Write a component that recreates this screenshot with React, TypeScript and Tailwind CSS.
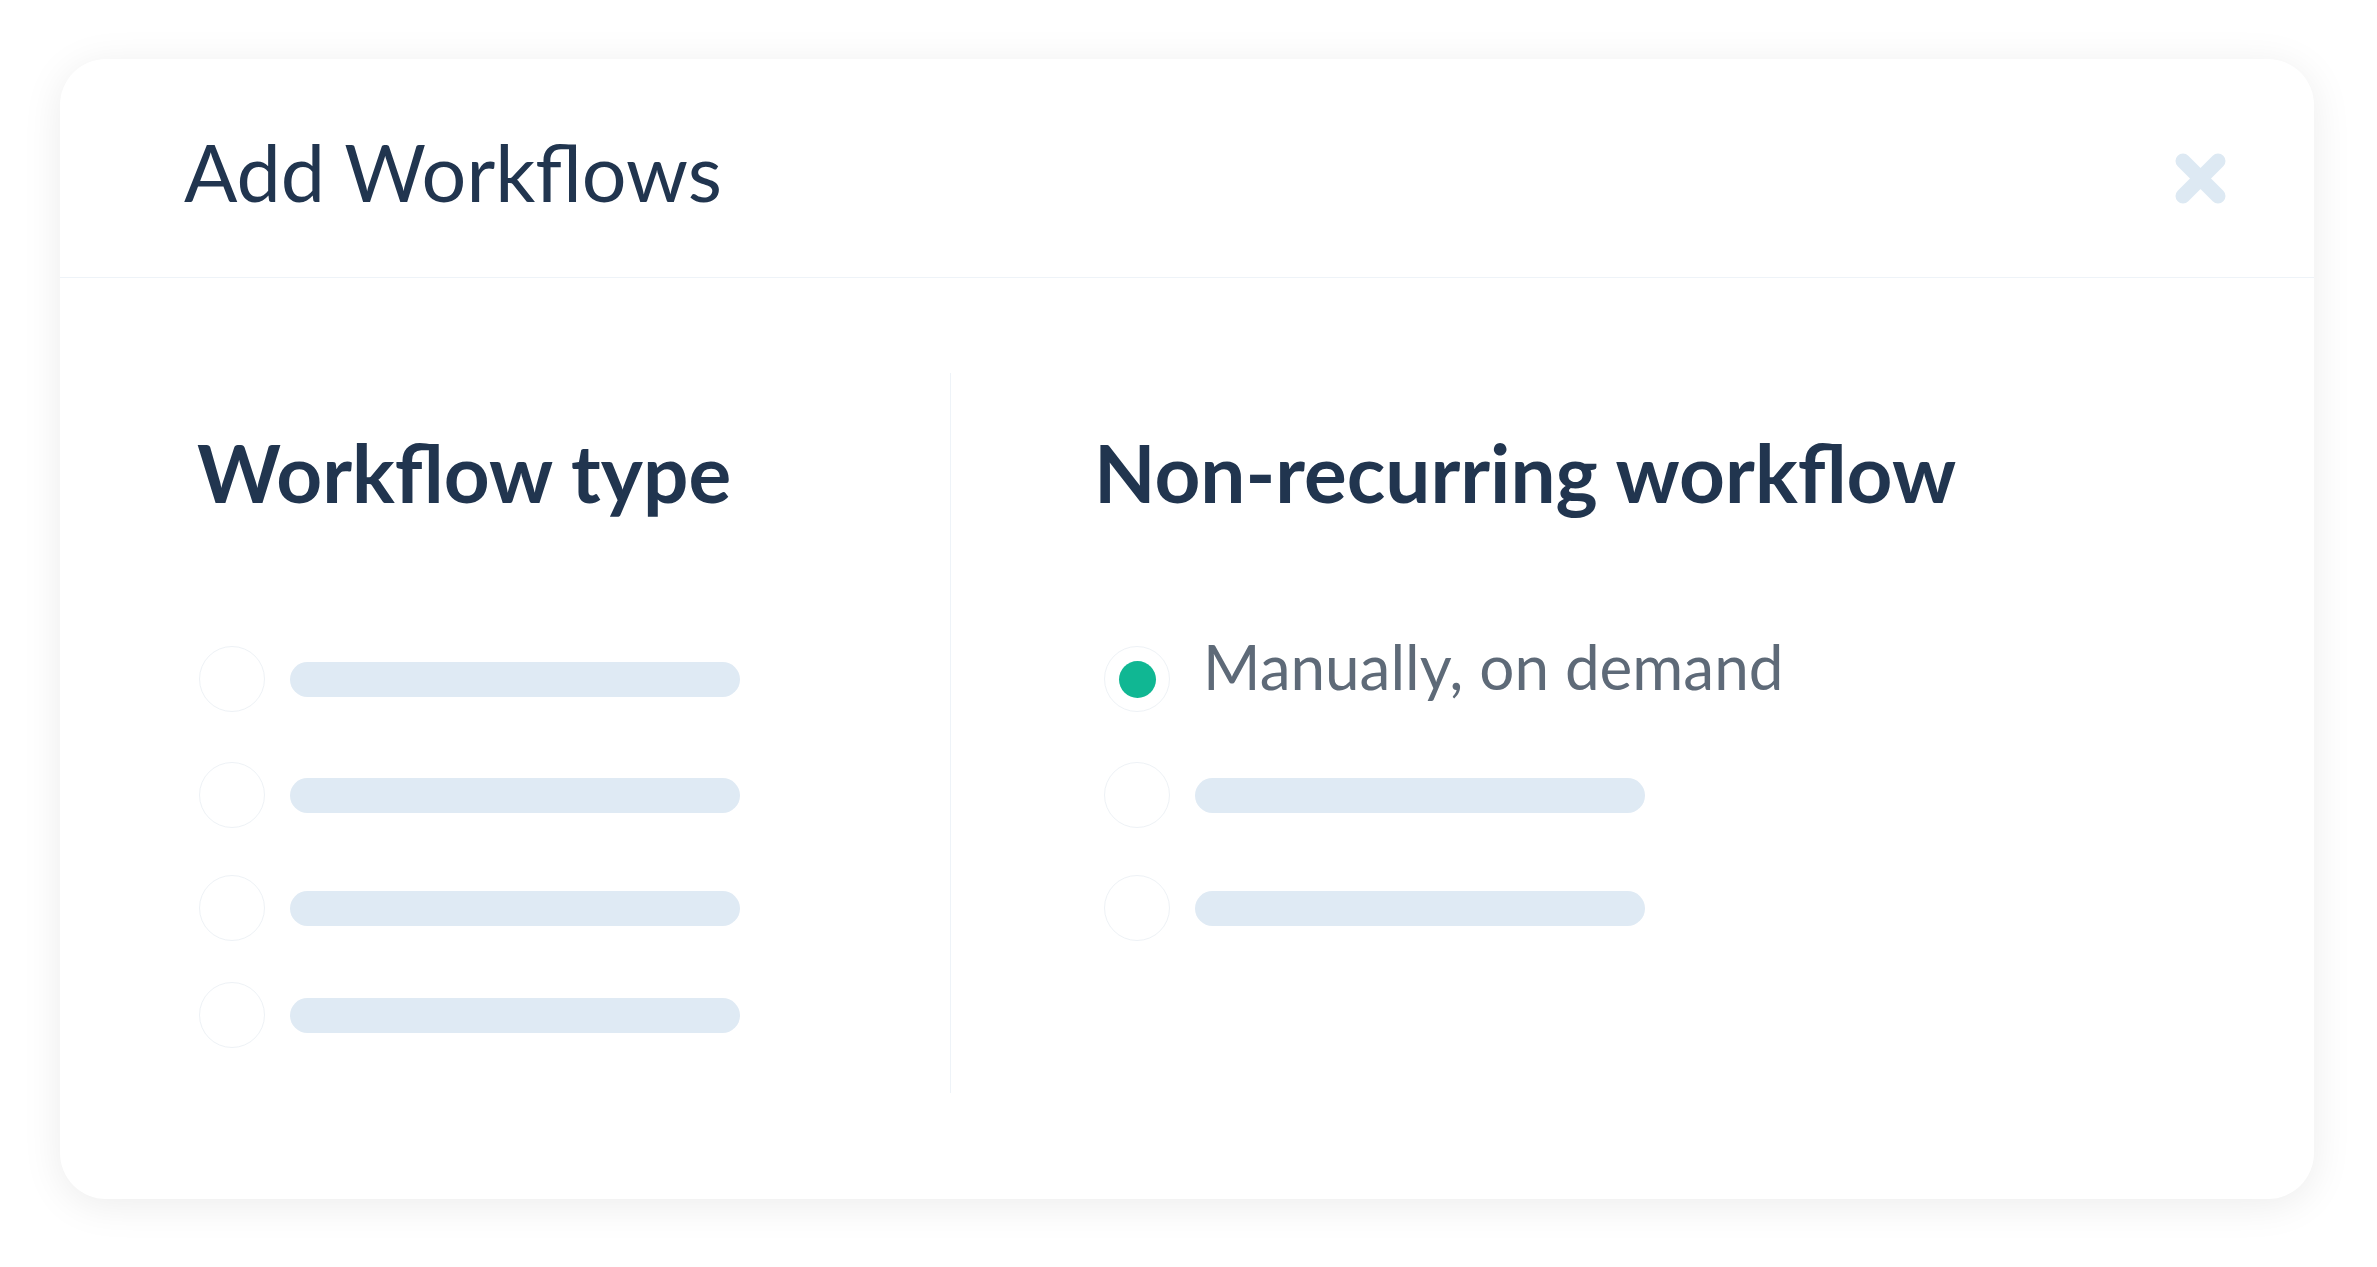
import React from 'react';

const rowGaps = [134, 50, 47, 41];

function Radio({ checked }: { checked?: boolean }) {
  return (
    <div className="flex h-[66px] w-[66px] shrink-0 items-center justify-center rounded-full border border-[#eef2f6] bg-white">
      {checked && <div className="h-[37px] w-[37px] rounded-full bg-[#10b793]" />}
    </div>
  );
}

function PlaceholderRow({ mt, indent }: { mt: number; indent: string }) {
  return (
    <div className={`flex items-center ${indent}`} style={{ marginTop: mt }}>
      <Radio />
      <div className="ml-[25px] h-[35px] w-[450px] rounded-full bg-[#dfeaf4]" />
    </div>
  );
}

function CloseIcon() {
  return (
    <svg width="51" height="51" viewBox="0 0 51 51" fill="none">
      <path
        d="M8 8L43 43M43 8L8 43"
        stroke="#dde9f3"
        strokeWidth="15"
        strokeLinecap="round"
      />
    </svg>
  );
}

export default function App() {
  return (
    <div
      className="min-h-screen bg-white pl-[60px] pt-[59px]"
      style={{ fontFamily: 'Lato, "Open Sans", sans-serif' }}
    >
      <div className="flex h-[1140px] w-[2254px] flex-col rounded-[46px] bg-white shadow-[0_6px_40px_rgba(0,0,0,0.08)]">
        {/* header */}
        <div className="flex h-[219px] shrink-0 items-start justify-between border-b border-[#eef3f8] pl-[124px] pr-[88px]">
          <h2 className="mt-[73px] text-[79px] font-normal leading-none text-[#21354f]">
            Add Workflows
          </h2>
          <button className="mt-[94px]">
            <CloseIcon />
          </button>
        </div>

        {/* body */}
        <div className="flex pt-[95px]">
          <div className="w-[890px] shrink-0 pl-[137px]">
            <h3 className="mt-[59px] text-[80px] font-bold leading-none text-[#21354f]">
              Workflow type
            </h3>
            {rowGaps.map((g, i) => (
              <PlaceholderRow key={i} mt={g} indent="ml-[2px]" />
            ))}
          </div>

          <div className="h-[720px] flex-1 border-l border-[#eef3f8] pl-[143px]">
            <h3 className="mt-[59px] text-[80px] font-bold leading-none text-[#21354f]">
              Non-recurring workflow
            </h3>
            <div className="ml-[10px] flex items-start" style={{ marginTop: rowGaps[0] }}>
              <Radio checked />
              <span className="-mt-[11px] ml-[33px] text-[62px] leading-none text-[#5e6a78]">
                Manually, on demand
              </span>
            </div>
            <PlaceholderRow mt={rowGaps[1]} indent="ml-[10px]" />
            <PlaceholderRow mt={rowGaps[2]} indent="ml-[10px]" />
          </div>
        </div>
      </div>
    </div>
  );
}
